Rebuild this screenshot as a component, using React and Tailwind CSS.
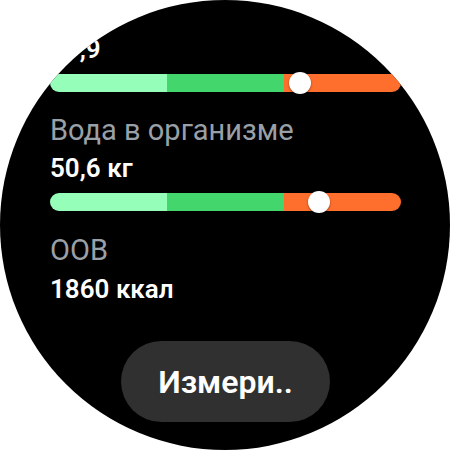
import React from "react";

function Bar({ knob }) {
  return (
    <div className="relative h-[18px] w-[351px]">
      <div className="flex h-full w-full overflow-hidden rounded-full">
        <div className="flex-1 bg-[#95feb9]" />
        <div className="flex-1 bg-[#43d66c]" />
        <div className="flex-1 bg-[#fe6e2c]" />
      </div>
      <div
        className="absolute top-[-2px] h-[22px] w-[22px] rounded-full bg-white shadow-[0_1px_2px_rgba(0,0,0,0.45)]"
        style={{ left: knob - 11 }}
      />
    </div>
  );
}

export default function App() {
  return (
    <div className="relative h-[450px] w-[450px] bg-white" style={{ fontFamily: "Roboto, 'Liberation Sans', sans-serif" }}>
      <div className="relative h-[450px] w-[450px] overflow-hidden rounded-full bg-black">
        <div className="flex flex-col pl-[50px] pt-[35px]">
          <div className="text-[26px] font-semibold leading-[28px] text-white">21,9</div>
          <div className="mt-[11px]">
            <Bar knob={250} />
          </div>

          <div className="mt-[22px] text-[29px] leading-[32px] text-[#9aa0a7]">Вода в организме</div>
          <div className="mt-[8px] text-[26px] font-semibold leading-[28px] text-white">50,6 кг</div>
          <div className="mt-[11px]">
            <Bar knob={269} />
          </div>

          <div className="mt-[23px] text-[29px] leading-[32px] text-[#9aa0a7]">ООВ</div>
          <div className="mt-[9px] text-[26px] font-semibold leading-[28px] text-white">1860 ккал</div>
        </div>

        <div className="absolute left-[121px] top-[341px] flex h-[81px] w-[209px] items-center justify-center rounded-full bg-[#303030]">
          <span className="text-[32px] font-semibold leading-none text-white">Измери..</span>
        </div>
      </div>
    </div>
  );
}
